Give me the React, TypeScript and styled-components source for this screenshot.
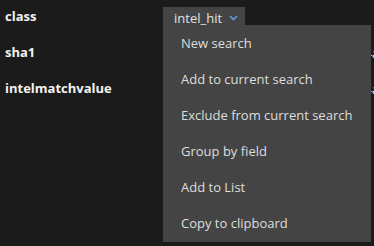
import styled, { createGlobalStyle } from "styled-components";

const GlobalStyle = createGlobalStyle`
  html {
    overflow: hidden;
    background: #1b1b1b;
  }
  body {
    margin: 0;
    min-height: 246px;
    background: #1b1b1b;
    font-family: "Open Sans", "DejaVu Sans", sans-serif;
  }
`;

const fields = [
  { name: "class", value: "intel_hit", menu: true },
  { name: "sha1", value: "3f8a9c2be41d7f6a0c5e9b8d21f4a7c6e3b0d9f2" },
  { name: "intelmatchvalue", value: "3f8a9c2be41d7f6a0c5e9b8d21f4a7c6e3b0d9f2" },
];

const menuItems = [
  "New search",
  "Add to current search",
  "Exclude from current search",
  "Group by field",
  "Add to List",
  "Copy to clipboard",
];

const Chevron = () => (
  <svg width="9" height="6" viewBox="0 0 9 6">
    <path d="M1 1l3.5 3.5L8 1" fill="none" stroke="#5b9fe0" strokeWidth="1.6" />
  </svg>
);

const App = () => {
  return (
    <>
      <GlobalStyle />
      <Table>
        {fields.map((f) => (
          <Row key={f.name}>
            <Label>{f.name}</Label>
            <Cell>
              {f.menu ? (
                <Dropdown>
                  <Trigger>
                    {f.value}
                    <Chevron />
                  </Trigger>
                  <Menu>
                    {menuItems.map((item) => (
                      <MenuItem key={item}>{item}</MenuItem>
                    ))}
                  </Menu>
                </Dropdown>
              ) : (
                <Value>{f.value}</Value>
              )}
            </Cell>
          </Row>
        ))}
      </Table>
    </>
  );
};

export default App;

const Table = styled.div`
  display: flex;
  flex-direction: column;
  width: 374px;
`;

const Row = styled.div`
  display: grid;
  grid-template-columns: 163px 1fr;
  height: 36px;
  padding-top: 6px;
  box-sizing: border-box;
`;

const Label = styled.div`
  padding-left: 5px;
  color: #f2f2f2;
  font-size: 13px;
  font-weight: 700;
  line-height: 20px;
`;

const Cell = styled.div`
  position: relative;
  white-space: nowrap;
  overflow: visible;
`;

const Value = styled.div`
  color: #e6e6e6;
  font-size: 13px;
  line-height: 22px;
  padding-left: 11px;
`;

const Dropdown = styled.div`
  position: relative;
  z-index: 2;
`;

const Trigger = styled.div`
  position: relative;
  z-index: 3;
  display: inline-flex;
  align-items: center;
  gap: 7px;
  width: 82px;
  height: 22px;
  box-sizing: border-box;
  padding-left: 11px;
  background: #444444;
  color: #e2e2e2;
  font-size: 13px;
  line-height: 22px;
`;

const Menu = styled.div`
  position: absolute;
  top: 19px;
  left: 0;
  width: 208px;
  padding-bottom: 1px;
  background: #444444;
  display: flex;
  flex-direction: column;
`;

const MenuItem = styled.div`
  height: 36px;
  display: flex;
  align-items: center;
  padding-left: 18px;
  color: #dedede;
  font-size: 13px;
`;
